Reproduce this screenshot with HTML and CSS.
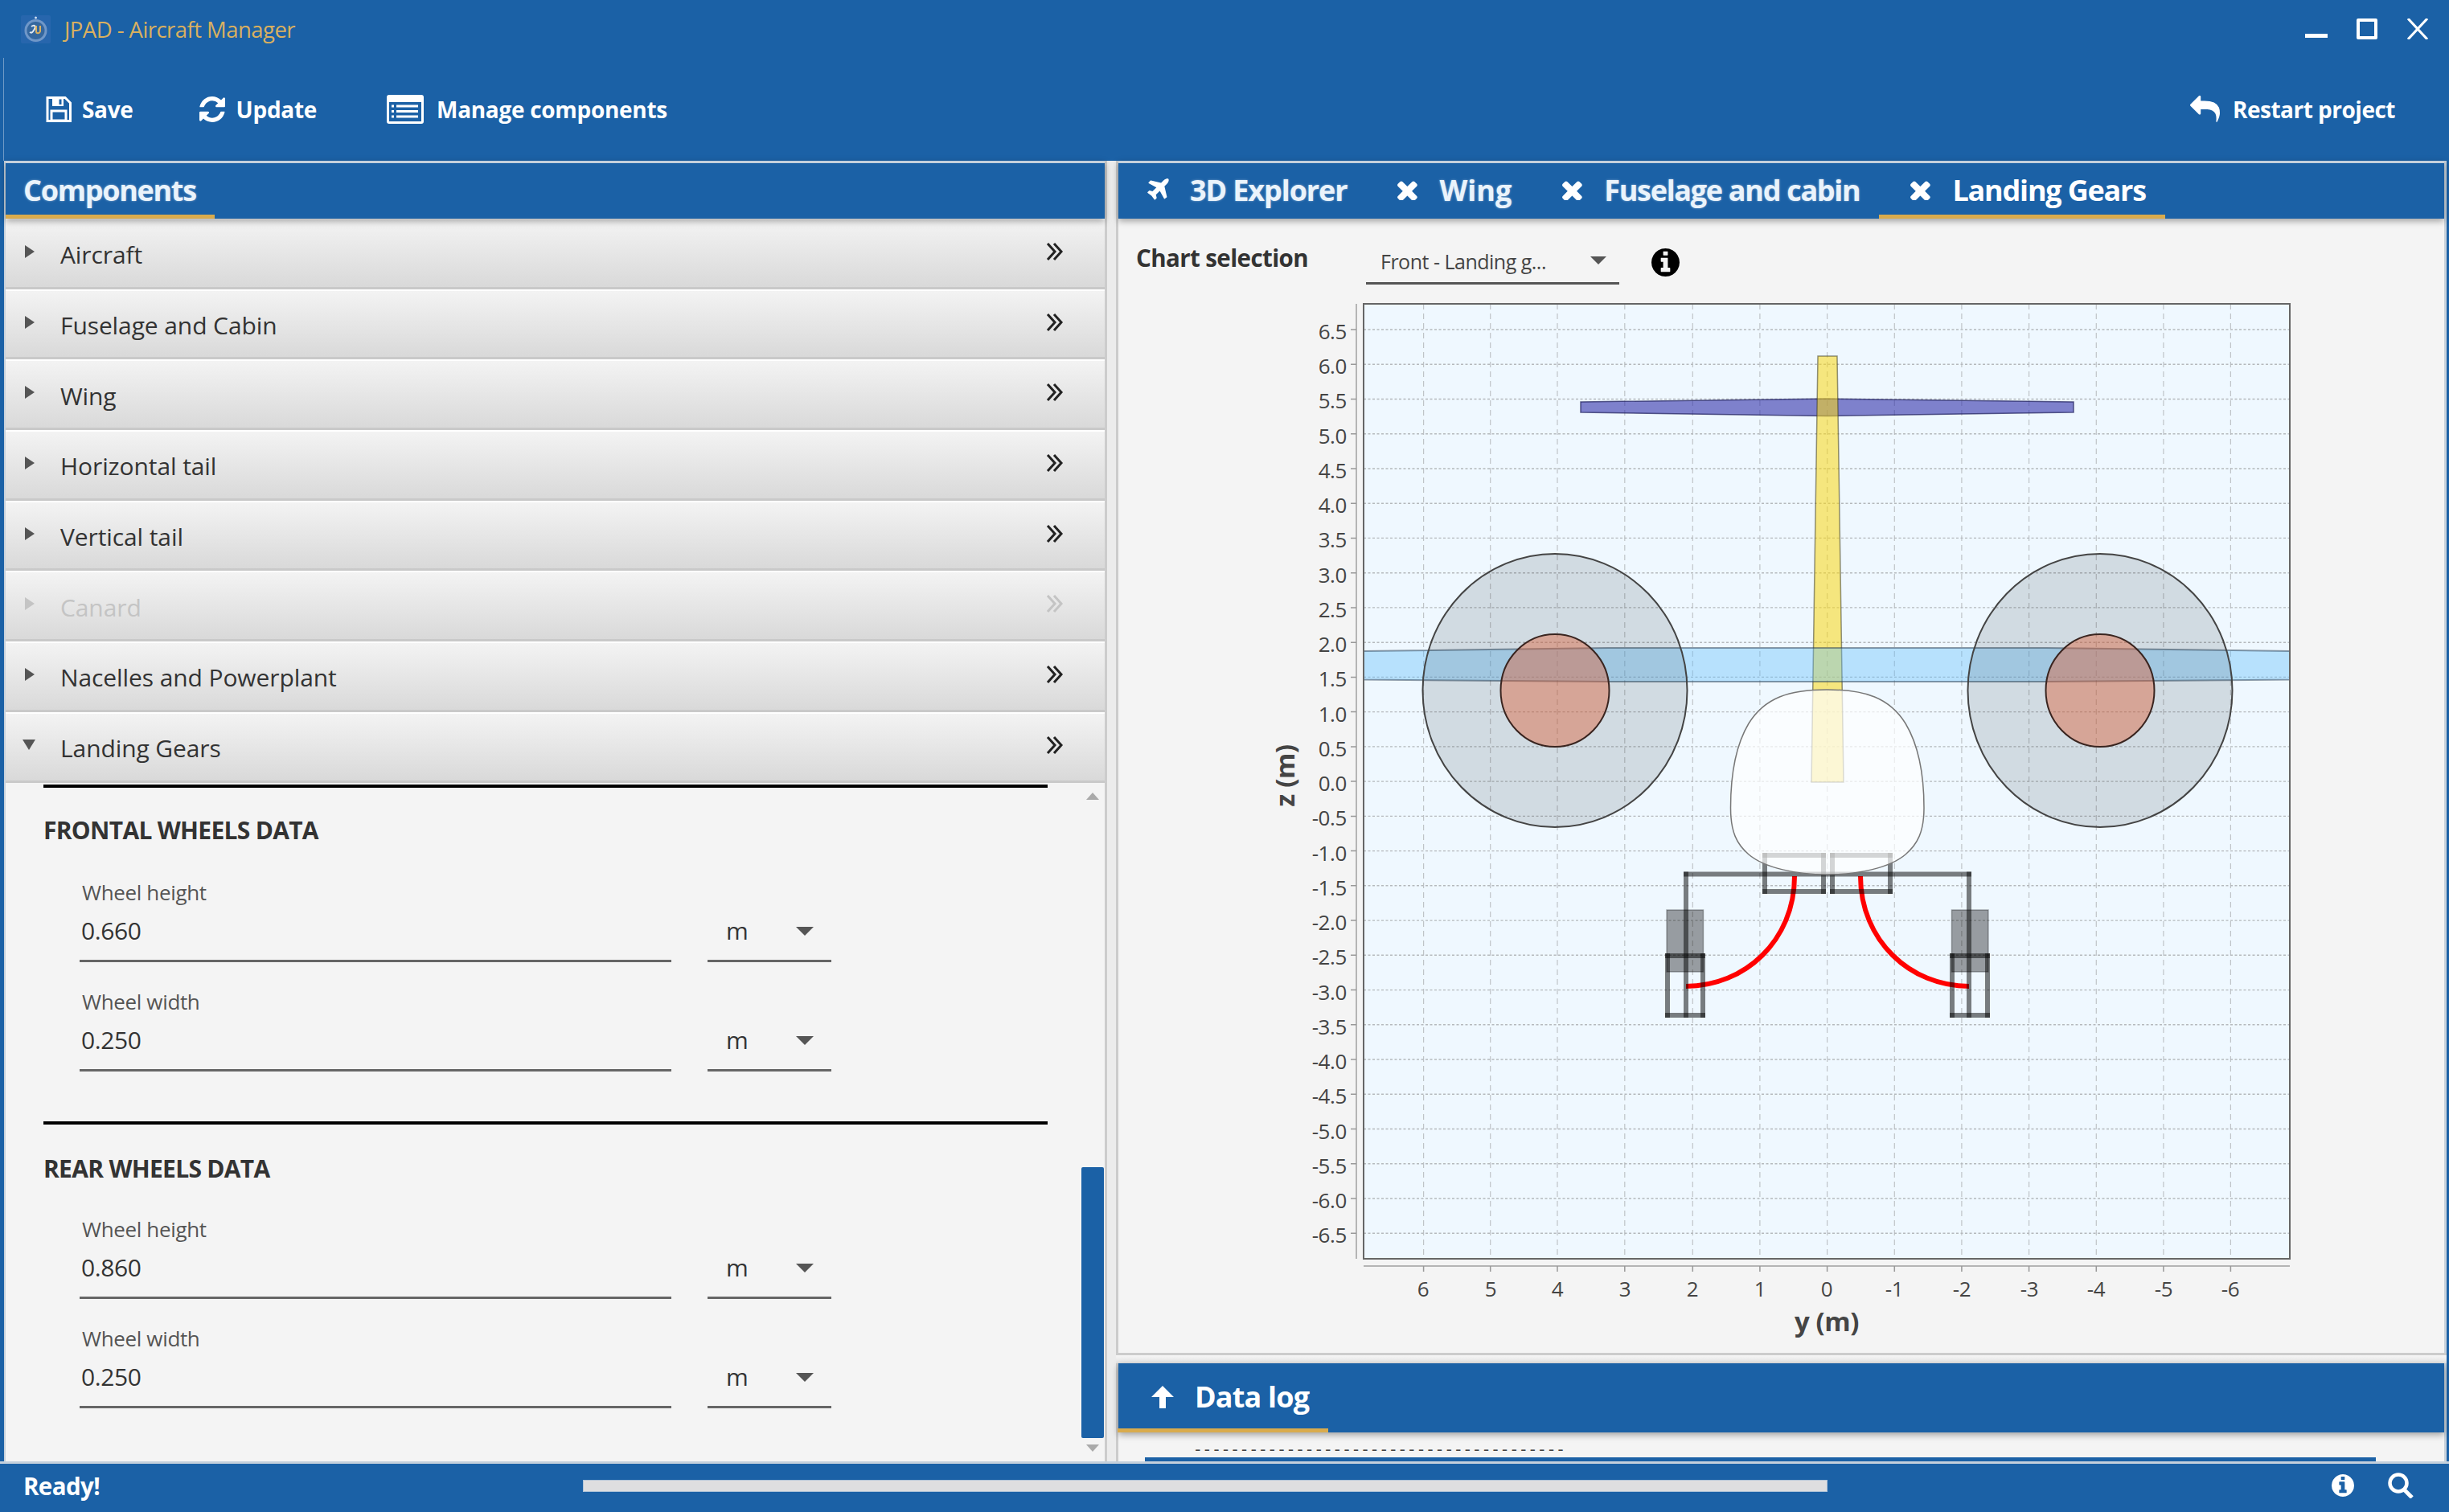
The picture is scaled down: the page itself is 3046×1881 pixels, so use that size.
FILE: index.html
```html
<!DOCTYPE html>
<html lang="en">
<head>
<meta charset="utf-8">
<title>JPAD - Aircraft Manager</title>
<link rel="stylesheet" href="styles.css">
</head>
<body>
<svg class="defs" width="0" height="0">
  <symbol id="i-times" viewBox="300 300 1200 1200"><path d="M1490 1322q0 40-28 68l-136 136q-28 28-68 28t-68-28l-294-294-294 294q-28 28-68 28t-68-28l-136-136q-28-28-28-68t28-68l294-294-294-294q-28-28-28-68t28-68l136-136q28-28 68-28t68 28l294 294 294-294q28-28 68-28t68 28l136 136q28 28 28 68t-28 68l-294 294 294 294q28 28 28 68z"/></symbol>
  <symbol id="i-info" viewBox="128 128 1536 1536"><path d="M1152 1376v-160q0-14-9-23t-23-9h-96v-512q0-14-9-23t-23-9h-320q-14 0-23 9t-9 23v160q0 14 9 23t23 9h96v320h-96q-14 0-23 9t-9 23v160q0 14 9 23t23 9h448q14 0 23-9t9-23zm-128-896v-160q0-14-9-23t-23-9h-192q-14 0-23 9t-9 23v160q0 14 9 23t23 9h192q14 0 23-9t9-23zm640 416q0 209-103 385.500t-279.500 279.500-385.500 103-385.500-103-279.500-279.500-103-385.500 103-385.500 279.500-279.500 385.500-103 385.500 103 279.500 279.500 103 385.500z"/></symbol>
  <symbol id="i-chev" viewBox="0 0 24 24"><path d="M3 2l9 10-9 10M11 2l9 10-9 10" fill="none" stroke="currentColor" stroke-width="3"/></symbol>
</svg>
<div class="app">
  <header class="titlebar">
    <svg class="logo" viewBox="0 0 37 35"><rect x="0" y="0" width="37" height="35" rx="2" fill="#2766ad"/><circle cx="18.500" cy="19" r="14" fill="#6f97c8"/><circle cx="18.500" cy="19" r="11" fill="#34679f"/><circle cx="18.500" cy="3" r="1.500" fill="#cfe0f2"/><path d="M13 14c4-3 6 0 4 3s-3 6-6 4" stroke="#dfe8f2" stroke-width="2" fill="none"/><path d="M19 13v7c0 3 4 3 5 0v-7" stroke="#d9b060" stroke-width="2" fill="none"/></svg>
    <span class="apptitle">JPAD - Aircraft Manager</span>
    <div class="winctl">
      <span class="win-min"></span>
      <span class="win-max"></span>
      <svg class="win-close" viewBox="0 0 26 26"><path d="M1 0l24 26M25 0L1 26" stroke="#fff" stroke-width="3" fill="none"/></svg>
    </div>
  </header>
  <nav class="toolbar">
    <div class="tool tool-save">
      <svg class="ic-save" viewBox="0 0 32 32"><path d="M2 1.500h22l6.500 6.500v22.500H2z" fill="none" stroke="#fff" stroke-width="3"/><path d="M8 2h14v10H8z" fill="#fff"/><path d="M16.500 3.500h3v6.500h-3z" fill="#1b61a6"/><path d="M7 18h18v12H7z" fill="none" stroke="#fff" stroke-width="3"/></svg>
      <span>Save</span>
    </div>
    <div class="tool tool-update">
      <svg class="ic-update" viewBox="128 128 1536 1536"><path fill="#fff" d="M1639 1056q0 5-1 7-64 268-268 434.500t-478 166.500q-146 0-282.500-55t-243.500-157l-129 129q-19 19-45 19t-45-19-19-45v-448q0-26 19-45t45-19h448q26 0 45 19t19 45-19 45l-137 137q71 66 161 102t187 36q134 0 250-65t186-179q11-17 53-117 8-23 30-23h192q13 0 22.500 9.500t9.500 22.500zm25-800v448q0 26-19 45t-45 19h-448q-26 0-45-19t-19-45 19-45l138-138q-148-137-349-137-134 0-250 65t-186 179q-11 17-53 117-8 23-30 23h-199q-13 0-22.500-9.500t-9.500-22.500v-7q65-268 270-434.500t480-166.500q146 0 284 55.500t245 156.500l130-129q19-19 45-19t45 19 19 45z"/></svg>
      <span>Update</span>
    </div>
    <div class="tool tool-manage">
      <svg class="ic-manage" viewBox="0 0 46 36"><rect x="0" y="0" width="46" height="36" rx="3" fill="#fff"/><rect x="3" y="9" width="40" height="24" fill="#1b61a6"/><path d="M6 14h3M6 20.500h3M6 27h3M12 14h27M12 20.500h27M12 27h27" stroke="#fff" stroke-width="3"/></svg>
      <span>Manage components</span>
    </div>
    <div class="tool tool-restart">
      <svg class="ic-reply" viewBox="0 128 1792 1536"><path fill="#fff" d="M1792 1120q0 166-127 451-3 7-10.500 24t-13.500 30-13 22q-12 17-28 17-15 0-23.500-10t-8.500-25q0-9 2.500-26.500t2.500-23.500q5-68 5-123 0-101-17.500-181t-48.500-138.500-80-101-105.500-69.500-133-42.500-154-21.500-175.500-6h-224v256q0 26-19 45t-45 19-45-19l-512-512q-19-19-19-45t19-45l512-512q19-19 45-19t45 19 19 45v256h224q713 0 875 403 53 134 53 333z"/></svg>
      <span>Restart project</span>
    </div>
  </nav>
  <main class="main">
    <section class="left">
      <div class="tabbar">
        <div class="tab tab-components"><span class="tab-text glow">Components</span></div>
      </div>
      <div class="acc"><span class="tri"></span><span class="acc-label">Aircraft</span><svg class="chev"><use href="#i-chev"/></svg></div>
      <div class="acc"><span class="tri"></span><span class="acc-label">Fuselage and Cabin</span><svg class="chev"><use href="#i-chev"/></svg></div>
      <div class="acc"><span class="tri"></span><span class="acc-label">Wing</span><svg class="chev"><use href="#i-chev"/></svg></div>
      <div class="acc"><span class="tri"></span><span class="acc-label">Horizontal tail</span><svg class="chev"><use href="#i-chev"/></svg></div>
      <div class="acc"><span class="tri"></span><span class="acc-label">Vertical tail</span><svg class="chev"><use href="#i-chev"/></svg></div>
      <div class="acc acc-off"><span class="tri"></span><span class="acc-label">Canard</span><svg class="chev"><use href="#i-chev"/></svg></div>
      <div class="acc"><span class="tri"></span><span class="acc-label">Nacelles and Powerplant</span><svg class="chev"><use href="#i-chev"/></svg></div>
      <div class="acc"><span class="tri tri-open"></span><span class="acc-label">Landing Gears</span><svg class="chev"><use href="#i-chev"/></svg></div>
      <div class="form">
        <div class="form-body">
          <div class="rule"></div>
          <h3 class="sect">FRONTAL WHEELS DATA</h3>
          <div class="field">
            <div class="flabel">Wheel height</div>
            <div class="frow"><div class="finput">0.660</div><div class="funit"><span>m</span><i class="arrow"></i></div></div>
          </div>
          <div class="field">
            <div class="flabel">Wheel width</div>
            <div class="frow"><div class="finput">0.250</div><div class="funit"><span>m</span><i class="arrow"></i></div></div>
          </div>
          <div class="rule rule-mid"></div>
          <h3 class="sect sect-rear">REAR WHEELS DATA</h3>
          <div class="field">
            <div class="flabel">Wheel height</div>
            <div class="frow"><div class="finput">0.860</div><div class="funit"><span>m</span><i class="arrow"></i></div></div>
          </div>
          <div class="field">
            <div class="flabel">Wheel width</div>
            <div class="frow"><div class="finput">0.250</div><div class="funit"><span>m</span><i class="arrow"></i></div></div>
          </div>
        </div>
        <div class="vscroll">
          <i class="sb-up"></i>
          <span class="sb-space"></span>
          <span class="sb-thumb"></span>
          <i class="sb-down"></i>
        </div>
      </div>
    </section>
    <div class="splitter"></div>
    <section class="right">
      <div class="tabbar">
        <div class="tab rtab rtab-first"><svg class="ic-tab ic-plane" viewBox="128 128 1536 1536"><path fill="#fff" d="M1568 160q44 52 12 148t-108 172l-161 161 160 696q5 19-12 33l-128 96q-7 6-19 6-4 0-7-1-15-3-21-16l-279-508-259 259 53 194q5 17-8 31l-96 96q-9 9-23 9h-2q-15-2-24-13l-189-252-252-189q-11-7-13-23-1-13 9-25l96-97q9-9 23-9 6 0 8 1l194 53 259-259-508-279q-14-8-17-24-2-16 9-27l128-128q14-13 30-8l665 159 160-160q76-76 172-108t148 12z"/></svg><span class="tab-text glow t-3d">3D Explorer</span></div>
        <div class="tab rtab"><svg class="ic-tab"><use href="#i-times"/></svg><span class="tab-text glow t-wing">Wing</span></div>
        <div class="tab rtab"><svg class="ic-tab"><use href="#i-times"/></svg><span class="tab-text glow t-fus">Fuselage and cabin</span></div>
        <div class="tab rtab rtab-on"><svg class="ic-tab"><use href="#i-times"/></svg><span class="tab-text t-lg">Landing Gears</span></div>
      </div>
      <div class="chartsel">
        <span class="chartsel-label">Chart selection</span>
        <div class="combo"><span>Front - Landing g...</span><i class="arrow"></i></div>
        <svg class="ic-info"><use href="#i-info"/></svg>
      </div>
      <svg class="chart" viewBox="1390 360 1653 1323" width="1653" height="1323">
        <rect class="plot" x="1696" y="378" width="1152" height="1188"/>
        <path class="grid-v" d="M1770.600 378V1566M1853.700 378V1566M1937 378V1566M2020.800 378V1566M2105.300 378V1566M2188.900 378V1566M2272.600 378V1566M2356.300 378V1566M2439.900 378V1566M2523.600 378V1566M2607.300 378V1566M2690.900 378V1566M2774.400 378V1566"/>
        <path class="grid-h" d="M1696 410H2848M1696 453.200H2848M1696 496.500H2848M1696 539.700H2848M1696 583H2848M1696 626.200H2848M1696 669.400H2848M1696 712.700H2848M1696 755.900H2848M1696 799.200H2848M1696 842.400H2848M1696 885.600H2848M1696 928.900H2848M1696 972.100H2848M1696 1015.400H2848M1696 1058.600H2848M1696 1101.800H2848M1696 1145.100H2848M1696 1188.300H2848M1696 1231.600H2848M1696 1274.800H2848M1696 1318H2848M1696 1361.300H2848M1696 1404.500H2848M1696 1447.800H2848M1696 1491H2848M1696 1534.200H2848"/>

        <polygon class="htail" points="1966,500 2272.600,496 2579,500 2579,513 2272.600,517.500 1966,513"/>
        <polygon class="vtail" points="2261,443 2285,443 2293,973 2253,973"/>
        <polygon class="wing" points="1696,810 2000,806 2545,806 2848,810 2848,845.500 2545,848 2000,848 1696,845.500"/>
        <ellipse class="disc" cx="1934" cy="859" rx="164.500" ry="170"/>
        <ellipse class="disc" cx="2612" cy="859" rx="164.500" ry="170"/>
        <ellipse class="nac" cx="1934" cy="859" rx="67.500" ry="70"/>
        <ellipse class="nac" cx="2612" cy="859" rx="67.500" ry="70"/>

        <path class="hose" d="M2232 1090C2232 1170 2170 1227 2097 1227M2314 1090C2314 1170 2376 1227 2449 1227"/>

        <rect class="tyre" x="2073" y="1132" width="45.500" height="77"/>
        <rect class="tyre" x="2427.500" y="1132" width="45.500" height="77"/>
        <g class="gear">
          <path d="M2097 1087.500H2449"/>
          <path d="M2097 1087.500V1263"/>
          <path d="M2449 1087.500V1263"/>
          <path d="M2074 1189H2118"/><path d="M2074 1263H2118"/><path d="M2074 1189V1263"/><path d="M2118 1189V1263"/>
          <path d="M2428 1189H2472"/><path d="M2428 1263H2472"/><path d="M2428 1189V1263"/><path d="M2472 1189V1263"/>
          <path d="M2195 1064H2268"/><path d="M2195 1109H2268"/><path d="M2195 1064V1109"/><path d="M2268 1064V1109"/>
          <path d="M2279 1064H2351"/><path d="M2279 1109H2351"/><path d="M2279 1064V1109"/><path d="M2351 1064V1109"/>
        </g>
        <path class="fuselage" d="M2272.600 858C2225 858 2195 868 2175 900C2160 925 2152.500 960 2152.500 1005C2152.500 1035 2160 1050 2175 1063C2195 1080 2235 1088 2272.600 1088C2310 1088 2350 1080 2370 1063C2385 1050 2393 1035 2393 1005C2393 960 2385 925 2370 900C2350 868 2320 858 2272.600 858Z"/>

        <rect class="frame" x="1696" y="378" width="1152" height="1188"/>
        <path class="axis" d="M1687 378V1566M1696 1575H2848"/>
        <path class="ticks" d="M1680 410h7M1680 453.200h7M1680 496.500h7M1680 539.700h7M1680 583h7M1680 626.200h7M1680 669.400h7M1680 712.700h7M1680 755.900h7M1680 799.200h7M1680 842.400h7M1680 885.600h7M1680 928.900h7M1680 972.100h7M1680 1015.400h7M1680 1058.600h7M1680 1101.800h7M1680 1145.100h7M1680 1188.300h7M1680 1231.600h7M1680 1274.800h7M1680 1318h7M1680 1361.300h7M1680 1404.500h7M1680 1447.800h7M1680 1491h7M1680 1534.200h7M1770.600 1575v7M1853.700 1575v7M1937 1575v7M2020.800 1575v7M2105.300 1575v7M2188.900 1575v7M2272.600 1575v7M2356.300 1575v7M2439.900 1575v7M2523.600 1575v7M2607.300 1575v7M2690.900 1575v7M2774.400 1575v7"/>
        <g class="ylabels">
          <text x="1675" y="422">6.5</text><text x="1675" y="465">6.0</text><text x="1675" y="508">5.5</text><text x="1675" y="552">5.0</text><text x="1675" y="595">4.5</text><text x="1675" y="638">4.0</text><text x="1675" y="681">3.5</text><text x="1675" y="725">3.0</text><text x="1675" y="768">2.5</text><text x="1675" y="811">2.0</text><text x="1675" y="854">1.5</text><text x="1675" y="898">1.0</text><text x="1675" y="941">0.5</text><text x="1675" y="984">0.0</text><text x="1675" y="1027">-0.5</text><text x="1675" y="1071">-1.0</text><text x="1675" y="1114">-1.5</text><text x="1675" y="1157">-2.0</text><text x="1675" y="1200">-2.5</text><text x="1675" y="1244">-3.0</text><text x="1675" y="1287">-3.5</text><text x="1675" y="1330">-4.0</text><text x="1675" y="1373">-4.5</text><text x="1675" y="1417">-5.0</text><text x="1675" y="1460">-5.5</text><text x="1675" y="1503">-6.0</text><text x="1675" y="1546">-6.5</text>
        </g>
        <g class="xlabels">
          <text x="1770" y="1613">6</text><text x="1854" y="1613">5</text><text x="1937" y="1613">4</text><text x="2021" y="1613">3</text><text x="2105" y="1613">2</text><text x="2189" y="1613">1</text><text x="2272" y="1613">0</text><text x="2356" y="1613">-1</text><text x="2440" y="1613">-2</text><text x="2524" y="1613">-3</text><text x="2607" y="1613">-4</text><text x="2691" y="1613">-5</text><text x="2774" y="1613">-6</text>
        </g>
        <text class="axlabel" x="2272" y="1656">y (m)</text>
        <text class="axlabel" transform="translate(1610 965) rotate(-90)">z (m)</text>
      </svg>
      <div class="strip"></div>
      <div class="logbar">
        <div class="logtab"><svg class="ic-up" viewBox="0 0 30 28"><path d="M15 0L29 14h-10v14h-8V14H1z" fill="#fff"/></svg><span class="tab-text">Data log</span></div>
      </div>
      <div class="logarea">
        <div class="dashes">----------------------------------------</div>
        <div class="hthumb"></div>
      </div>
    </section>
  </main>
  <footer class="status">
    <span class="ready">Ready!</span>
    <div class="progress"></div>
    <svg class="ic-sinfo"><use href="#i-info"/></svg>
    <svg class="ic-search" viewBox="0 0 34 32"><circle cx="14" cy="13" r="10.500" fill="none" stroke="#fff" stroke-width="4.500"/><path d="M21 21l10 10" stroke="#fff" stroke-width="5"/></svg>
  </footer>
</div>
</body>
</html>
```
FILE: styles.css
```css
* { box-sizing: border-box; }
html, body { margin: 0; padding: 0; }
body { width: 3046px; height: 1881px; overflow: hidden; background: #1b61a6; font-family: "Open Sans", "Noto Sans", sans-serif; color: #333; }
.defs { position: absolute; }
.app { display: flex; flex-direction: column; width: 3046px; height: 1881px; background: #1b61a6; }

.titlebar { height: 72px; display: flex; align-items: center; padding: 0 26px; flex: none; }
.logo { width: 37px; height: 35px; margin-right: 17px; }
.apptitle { color: #d9b060; font-size: 27.500px; letter-spacing: -0.550px; }
.winctl { margin-left: auto; display: flex; align-items: flex-start; height: 26px; margin-right: 0; }
.win-min { width: 28px; height: 5px; background: #fff; margin-top: 19px; margin-right: 36px; }
.win-max { width: 26px; height: 26px; border: 4px solid #fff; border-radius: 2px; margin-right: 37px; }
.win-close { width: 26px; height: 26px; }

.toolbar { height: 128px; flex: none; display: flex; align-items: center; margin-left: 4px; padding: 0 67px 0 52px; color: #fff; font-weight: 700; font-size: 28px; letter-spacing: -0.300px; border-left: 1px solid #6f9ac6; }
.tool { display: flex; align-items: center; }
.tool-update { margin-left: 82px; }
.tool-manage { margin-left: 87px; }
.tool-restart { margin-left: auto; letter-spacing: -0.500px; }
.ic-save { width: 32px; height: 32px; margin-right: 13px; }
.ic-update { width: 32px; height: 32px; margin-right: 14px; }
.ic-manage { width: 46px; height: 36px; margin-right: 16px; }
.ic-reply { width: 37px; height: 34px; margin-right: 16px; }

.main { flex: 1; display: flex; min-height: 0; background: #1b61a6; padding-left: 5px; }
.left { width: 1372px; display: flex; flex-direction: column; background: #f4f4f4; border-right: 3px solid #ccc; border-left: 2px solid #c8d2dc; flex: none; }
.splitter { width: 11px; flex: none; background: #ececec; }
.right { width: 1655px; flex: none; display: flex; flex-direction: column; background: #f4f4f4; border-left: 3px solid #ccc; border-right: 3px solid #c8d2dc; }

.tabbar { height: 72px; flex: none; display: flex; background: #1b61a6; border-top: 3px solid #c4d0dc; box-shadow: 0 3px 8px rgba(0,0,0,.35); position: relative; color: #fff; }
.tab { display: flex; align-items: center; font-weight: 700; font-size: 36px; letter-spacing: -1.100px; padding-top: 3px; border-bottom: 5px solid transparent; }
.tab-components { width: 260px; padding-left: 22px; border-bottom-color: #d9ab4d; letter-spacing: -1.300px; }
.glow { color: #eaf3fb; text-shadow: 0 0 3px rgba(255,255,255,.45); }
.rtab { padding-left: 39px; padding-right: 24px; }
.rtab-first { padding-left: 35px; }
.rtab-on { border-bottom-color: #d9ab4d; }
.t-3d { letter-spacing: -1.100px; }
.t-wing { letter-spacing: 0; }
.t-fus { letter-spacing: -1.300px; }
.t-lg { letter-spacing: -1.200px; }
.ic-tab { width: 25px; height: 25px; fill: #fff; margin-right: 27px; flex: none; }
.ic-plane { width: 29px; height: 29px; margin-right: 25px; }

.acc { height: 87.700px; flex: none; display: flex; align-items: center; padding: 3px 50px 0 22px; background: linear-gradient(#f3f3f3, #d9d9d9); border-bottom: 3px solid #c9c9c9; border-top: 2px solid #fff; font-size: 30px; color: #333; }
.tri { width: 0; height: 0; border-left: 12px solid #555; border-top: 8px solid transparent; border-bottom: 8px solid transparent; margin-right: 32px; margin-top: -8px; margin-left: 2px; }
.tri-open { border-left: 8px solid transparent; border-right: 8px solid transparent; border-top: 13px solid #555; border-bottom: 0; margin-left: -1px; margin-right: 31px; }
.acc-label { letter-spacing: -0.100px; }
.chev { width: 24px; height: 24px; margin-left: auto; margin-top: -8px; color: #222; }
.acc-off { color: #c4c4c4; }
.acc-off .tri { border-left-color: #c4c4c4; }
.acc-off .chev { color: #c4c4c4; }

.form { flex: 1; display: flex; min-height: 0; }
.form-body { flex: 1; padding-top: 2px; }
.rule { height: 4px; width: 1249px; margin-left: 47px; background: #000; }
.rule-mid { margin-top: 62px; }
.sect { margin: 33px 0 39px 47px; font-size: 30px; line-height: 40px; font-weight: 700; letter-spacing: -0.700px; color: #333; }
.sect-rear { margin-top: 35px; margin-bottom: 37px; }
.field { padding-left: 92px; margin-bottom: 31px; }
.field:last-of-type { margin-bottom: 0; }
.flabel { height: 36px; line-height: 36px; font-size: 26px; letter-spacing: -0.350px; color: #555; padding-left: 3px; }
.frow { display: flex; gap: 45px; height: 69px; }
.finput { width: 736px; height: 69px; line-height: 60px; font-size: 30px; letter-spacing: -0.400px; border-bottom: 3px solid #666; color: #333; padding-left: 2px; }
.funit { width: 154px; height: 69px; display: flex; line-height: 60px; font-size: 30px; border-bottom: 3px solid #666; padding-left: 23px; color: #333; }
.arrow { width: 0; height: 0; border-left: 11px solid transparent; border-right: 11px solid transparent; border-top: 11px solid #555; margin: 25px 0 0 auto; margin-right: 22px; }

.vscroll { width: 30px; flex: none; display: flex; flex-direction: column; align-items: center; padding: 12px 0 12px 0; }
.sb-up { width: 0; height: 0; border-left: 8px solid transparent; border-right: 8px solid transparent; border-bottom: 9px solid #aaa; }
.sb-space { flex: 1; }
.sb-thumb { width: 28px; height: 337px; background: #1b61a6; border-radius: 2px; margin-bottom: 8px; }
.sb-down { width: 0; height: 0; border-left: 8px solid transparent; border-right: 8px solid transparent; border-top: 9px solid #aaa; }

.chartsel { height: 88px; flex: none; display: flex; align-items: flex-start; padding-left: 22px; }
.chartsel-label { font-weight: 700; font-size: 29.500px; letter-spacing: -0.600px; margin-top: 29px; width: 286px; line-height: 40px; color: #333; white-space: nowrap; }
.combo { width: 315px; height: 55px; margin-top: 27px; display: flex; border-bottom: 3px solid #555; padding-left: 18px; font-size: 25px; letter-spacing: -0.500px; line-height: 52px; color: #444; margin-right: 40px; }
.combo .arrow { border-left-width: 10px; border-right-width: 10px; border-top-width: 10px; margin-top: 20px; margin-right: 16px; }
.ic-info { width: 35px; height: 35px; fill: #000; margin-top: 37px; }

.chart { display: block; flex: none; margin-left: -1px; margin-right: -4px; }
.plot { fill: #eff8ff; }
.frame { fill: none; stroke: #666; stroke-width: 2; }
.grid-v { fill: none; stroke: #bfc4c8; stroke-width: 1.200; stroke-dasharray: 7 5; }
.grid-h { fill: none; stroke: #b5b9bd; stroke-width: 1.400; stroke-dasharray: 3 2.500; }
.htail { fill: rgba(50,50,170,.6); stroke: rgba(30,30,90,.7); stroke-width: 1.500; }
.vtail { fill: rgba(250,215,20,.55); stroke: rgba(60,60,40,.55); stroke-width: 1.500; }
.wing { fill: rgba(100,190,250,.4); stroke: rgba(40,60,80,.5); stroke-width: 2; }
.disc { fill: rgba(30,40,50,.14); stroke: #444; stroke-width: 2; }
.nac { fill: rgba(220,100,60,.45); stroke: #3a2520; stroke-width: 2; }
.hose { fill: none; stroke: #f00; stroke-width: 6; }
.tyre { fill: rgba(0,0,0,.37); stroke: rgba(0,0,0,.3); stroke-width: 1.500; }
.gear path { fill: none; stroke: rgba(0,0,0,.5); stroke-width: 6; stroke-linecap: square; }
.fuselage { fill: rgba(255,255,255,.68); stroke: #777; stroke-width: 1.500; }
.axis { fill: none; stroke: #b5b5b5; stroke-width: 2; }
.ticks { fill: none; stroke: #999; stroke-width: 1.500; }
.ylabels text { font-size: 26px; letter-spacing: -0.400px; fill: #444; text-anchor: end; }
.xlabels text { font-size: 26px; letter-spacing: -0.400px; fill: #444; text-anchor: middle; }
.axlabel { font-size: 33px; font-weight: 700; fill: #444; text-anchor: middle; letter-spacing: -0.400px; }

.strip { height: 13px; flex: none; background: linear-gradient(#f6f6f6, #e4e4e4); border-top: 3px solid #ccc; margin: 0 -3px; }
.logbar { height: 86px; flex: none; background: #1b61a6; display: flex; box-shadow: 0 3px 8px rgba(0,0,0,.35); position: relative; color: #fff; }
.logtab { width: 262px; margin-left: -1px; display: flex; align-items: center; padding-left: 41px; padding-top: 2px; border-bottom: 5px solid #d9ab4d; font-weight: 700; font-size: 36px; letter-spacing: -0.800px; }
.ic-up { width: 30px; height: 28px; margin-right: 25px; }
.logarea { height: 36px; flex: none; display: flex; flex-direction: column; padding: 14px 85px 0 33px; overflow: hidden; }
.dashes { height: 17px; line-height: 19px; font-family: "Liberation Mono", monospace; font-size: 19.300px; color: #444; padding-left: 60px; white-space: nowrap; }
.hthumb { height: 5px; background: #1b61a6; }

.status { height: 63px; flex: none; display: flex; align-items: center; padding: 0 43px 6px 29px; color: #fff; border-top: 3px solid #c4d0dc; }
.ready { width: 696px; font-weight: 700; font-size: 29.500px; letter-spacing: -0.600px; }
.progress { width: 1548px; height: 15px; background: #dedee0; border: 1px solid #b0c4d8; }
.ic-sinfo { width: 28px; height: 28px; fill: #fff; margin-left: auto; }
.ic-search { width: 34px; height: 32px; margin-left: 41px; }
```
